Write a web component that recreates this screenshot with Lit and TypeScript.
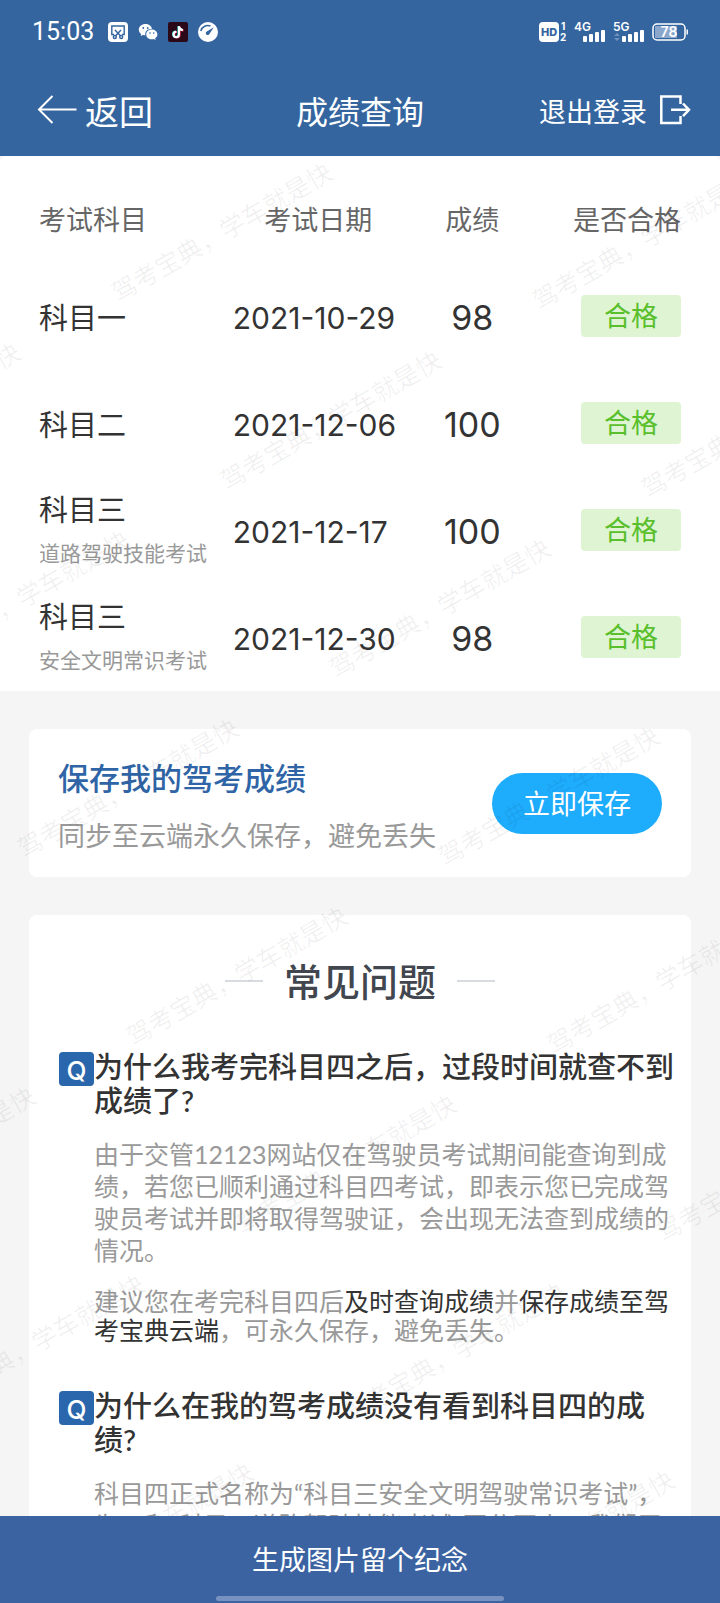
import { LitElement, html, css, svg } from "lit";
import { customElement, property } from "lit/decorators.js";

interface ExamRow {
  subject: string;
  note?: string;
  date: string;
  score: number;
}

const EXAMS: ExamRow[] = [
  { subject: "科目一", date: "2021-10-29", score: 98 },
  { subject: "科目二", date: "2021-12-06", score: 100 },
  { subject: "科目三", note: "道路驾驶技能考试", date: "2021-12-17", score: 100 },
  { subject: "科目三", note: "安全文明常识考试", date: "2021-12-30", score: 98 },
];

/* Phone status bar: clock, notification icons, signal and battery. */
@customElement("status-bar")
class StatusBar extends LitElement {
  static styles = css`
    :host {
      display: flex;
      align-items: center;
      justify-content: space-between;
      height: 64px;
      padding: 0 32px;
      color: #fff;
    }
    .group {
      display: flex;
      align-items: center;
      gap: 7px;
    }
    .left {
      gap: 10px;
    }
    .time {
      margin-right: 4px;
      font: 400 25px/32px Roboto, sans-serif;
    }
    .small {
      font: 700 10px Inter, sans-serif;
      fill: #fff;
    }
    .network {
      font: 600 12px Inter, sans-serif;
      fill: #fff;
    }
    .hd {
      font: 800 11px Inter, sans-serif;
      fill: #34659f;
    }
    .charge {
      font: 600 14px Inter, sans-serif;
      fill: #fff;
    }
    svg {
      display: block;
      overflow: visible;
    }
  `;

  private bars(x: number) {
    return [0, 1, 2, 3].map(
      (i) => svg`<rect x=${x + i * 6} y=${14 - i * 2} width="4" height=${6 + i * 2} rx="1" fill="#fff"/>`
    );
  }

  render() {
    return html`
      <div class="group left">
        <span class="time">15:03</span>
        <svg width="20" height="20" viewBox="0 0 20 20" fill="none" stroke="#34659f" stroke-width="1.4">
          <rect width="20" height="20" rx="4" fill="#fff" stroke="none" />
          <path d="M6 12.5H3.8V4h12.4v8.5H14" />
          <path d="M7 8l5.6 6M13 8l-5.6 6" />
          <circle cx="6.8" cy="15" r="1.5" />
          <circle cx="13.2" cy="15" r="1.5" />
        </svg>
        <svg width="20" height="20" viewBox="0 0 20 20">
          <path fill="#fff" d="M7.500 2C3.600 2 .8 4.600.8 7.700c0 1.800 1 3.300 2.400 4.300l-.6 2.100 2.300-1.200c.9.200 1.700.3 2.400.3C6.700 9.400 9.800 6.600 14 6.700 13.400 4 10.700 2 7.500 2z" />
          <path fill="#fff" d="M19.400 12.400c0-2.700-2.600-4.800-5.600-4.800-3.100 0-5.600 2.100-5.600 4.800s2.500 4.800 5.600 4.800c.7 0 1.300-.1 1.900-.3l1.900 1-.5-1.700c1.400-.9 2.300-2.200 2.300-3.800z" />
          <g fill="#34659f">
            <circle cx="5.300" cy="6" r=".9" />
            <circle cx="9.700" cy="6" r=".9" />
            <circle cx="12" cy="11" r=".8" />
            <circle cx="15.700" cy="11" r=".8" />
          </g>
        </svg>
        <svg width="20" height="20" viewBox="0 0 20 20" fill="none" stroke-width="2">
          <rect width="20" height="20" rx="2" fill="#2a0818" />
          <path stroke="#f5365c" d="M11.600 4.600v8.200a2.700 2.700 0 1 1-2.700-2.700M11.600 5c.3 2 1.800 3.300 3.900 3.400" />
          <path stroke="#35e0e0" d="M10.400 4v8.200a2.700 2.700 0 1 1-2.700-2.700M10.400 4.400c.3 2 1.800 3.300 3.900 3.400" />
          <path stroke="#fff" d="M11 4.200v8.300a2.700 2.700 0 1 1-2.700-2.700M11 4.500c.3 2 1.800 3.400 3.900 3.500" />
        </svg>
        <svg width="20" height="20" viewBox="0 0 20 20">
          <circle cx="10" cy="10" r="10" fill="#fff" />
          <path fill="none" stroke="#34659f" stroke-width="1.500" d="M2.800 9C4 4.500 8.500 2.500 12.500 4" />
          <path fill="#34659f" d="M15.800 5.200l-4.400 6.700a1.900 1.900 0 1 1-2.600-2.500z" />
        </svg>
      </div>
      <div class="group">
        <svg width="28" height="20" viewBox="0 0 28 20">
          <rect width="20" height="20" rx="4" fill="#fff" />
          <text class="hd" x="10" y="14" text-anchor="middle">HD</text>
          <text class="small" x="22" y="8">1</text>
          <text class="small" x="21" y="19">2</text>
        </svg>
        <svg width="32" height="20" viewBox="0 0 32 20">
          <text class="network" x="0" y="9">4G</text>
          ${this.bars(9)}
        </svg>
        <svg width="32" height="20" viewBox="0 0 32 20">
          <text class="network" x="0" y="9">5G</text>
          <path fill="#6f92bf" d="M1 14l3-3 3 3zM1 16l3 3 3-3z" />
          ${this.bars(9)}
        </svg>
        <svg width="36" height="18" viewBox="0 0 36 18">
          <rect x="3" y="3" width="22" height="12" fill="#8ba7cc" />
          <rect x="1" y="1" width="32" height="16" rx="4" fill="none" stroke="#fff" stroke-width="1.500" />
          <path stroke="#fff" stroke-width="1.500" d="M35.200 6.500v5" />
          <text class="charge" x="17" y="14" text-anchor="middle">78</text>
        </svg>
      </div>
    `;
  }
}

/* One question with its answer below; the answer is slotted. */
@customElement("faq-item")
class FaqItem extends LitElement {
  @property() question = "";

  static styles = css`
    :host {
      display: grid;
      grid-template-columns: 35px 1fr;
      row-gap: 20px;
    }
    .mark {
      box-sizing: border-box;
      height: 34px;
      margin-top: 2px;
      padding-top: 3px;
      border-radius: 4px;
      background: #2a66ab;
      color: #fff;
      font: 500 26px/32px Inter, sans-serif;
      text-align: center;
    }
    .question {
      margin: 0;
      color: #333;
      font-size: 29px;
      line-height: 34px;
      font-weight: 500;
    }
    .answer {
      grid-column: 2;
      display: flex;
      flex-direction: column;
      gap: 21px;
    }
  `;

  render() {
    return html`
      <span class="mark" aria-hidden="true">Q</span>
      <h3 class="question">${this.question}</h3>
      <div class="answer"><slot></slot></div>
    `;
  }
}

/* Slanted brand text repeated over the content. */
@customElement("water-mark")
class WaterMark extends LitElement {
  static styles = css`
    :host {
      position: absolute;
      inset: 0;
      overflow: hidden;
      pointer-events: none;
    }
    svg {
      display: block;
      width: 100%;
      height: 100%;
    }
    .mark {
      font-size: 25px;
      fill: #000;
      fill-opacity: 0.06;
    }
  `;

  render() {
    const marks = [];
    for (let row = 0; row < 8; row++) {
      for (let col = -2; col < 2; col++) {
        const x = 124 + row * 109 + col * 421;
        const y = 133 + row * 188 + col * 8;
        if (x > -200 && x < 720) {
          marks.push(svg`<text class="mark" x="-12" y="9" transform="translate(${x} ${y}) rotate(-30)">驾考宝典，学车就是快</text>`);
        }
      }
    }
    return html`<svg aria-hidden="true">${marks}</svg>`;
  }
}

@customElement("app-root")
class AppRoot extends LitElement {
  static styles = css`
    :host {
      display: flex;
      flex-direction: column;
      height: 100vh;
      background: #f5f5f5;
      color: #333;
      font-family: Lato, "Noto Sans CJK SC", sans-serif;
    }
    button {
      border: 0;
      padding: 0;
      background: none;
      color: #fff;
      font-family: inherit;
      font-size: 27px;
      cursor: pointer;
    }
    .top {
      flex: none;
      background: #34659f;
      color: #fff;
    }
    .nav {
      display: grid;
      grid-template-columns: 1fr auto 1fr;
      align-items: center;
      height: 92px;
      padding: 0 29px;
    }
    .back,
    .logout {
      display: flex;
      align-items: center;
    }
    .back {
      gap: 8px;
      padding-left: 8px;
      font-size: 34px;
    }
    .logout {
      justify-self: end;
      gap: 12px;
    }
    .title {
      margin: 0;
      font-size: 32px;
      font-weight: 400;
    }
    .content {
      position: relative;
      flex: 1;
      min-height: 0;
    }
    .scroll {
      height: 100%;
      overflow-y: auto;
      scrollbar-width: none;
    }
    .results {
      padding: 18px 39px 1px;
      border-radius: 6px 6px 0 0;
      background: #fff;
    }
    .table {
      width: 100%;
      table-layout: fixed;
      border-collapse: collapse;
    }
    .table th,
    .table td {
      padding: 0;
      text-align: center;
    }
    .table th {
      height: 88px;
      color: #666;
      font-size: 27px;
      font-weight: 400;
    }
    .table td {
      height: 107px;
    }
    .table .subject {
      width: 28%;
      text-align: left;
      white-space: nowrap;
    }
    .table .date {
      width: 31%;
    }
    .table .score {
      width: 17%;
    }
    .table .status {
      width: 24%;
      text-align: right;
    }
    .name {
      display: block;
      padding-top: 4px;
      font-size: 29px;
      line-height: 42px;
    }
    .note {
      display: block;
      color: #999;
      font-size: 21px;
      line-height: 44px;
    }
    .table td.date,
    .table td.score {
      box-sizing: border-box;
      padding-top: 4px;
      font-family: Inter, sans-serif;
    }
    .table td.date {
      padding-left: 14px;
      font-size: 30px;
      text-align: left;
    }
    .table td.score {
      font-size: 34px;
    }
    .badge {
      display: inline-block;
      width: 100px;
      border-radius: 4px;
      background: #def4d2;
      color: #5abf2c;
      font-size: 27px;
      line-height: 42px;
      text-align: center;
      vertical-align: middle;
    }
    .card {
      margin: 38px 29px 0;
      border-radius: 8px;
      background: #fff;
    }
    .save {
      display: flex;
      align-items: center;
      justify-content: space-between;
      min-height: 148px;
      padding: 0 29px;
    }
    .save-title {
      margin: 0;
      padding-top: 8px;
      color: #2f65a6;
      font-size: 31px;
      line-height: 58px;
      font-weight: 500;
    }
    .save-text {
      margin: 0;
      color: #999;
      font-size: 27px;
      line-height: 58px;
    }
    .save-button {
      padding: 0 31px;
      border-radius: 31px;
      background: #1eacfd;
      line-height: 61px;
    }
    .faq {
      display: flex;
      flex-direction: column;
      gap: 44px;
      padding: 41px 17px 40px 30px;
    }
    .faq-title {
      display: flex;
      align-items: center;
      justify-content: center;
      gap: 21px;
      margin: 0 13px 0 0;
      color: #41464f;
      font-size: 38px;
      line-height: 50px;
      font-weight: 500;
    }
    .faq-title::before,
    .faq-title::after {
      content: "";
      width: 38px;
      height: 2px;
      background: #d8dbdf;
    }
    .text {
      margin: 0;
      color: #999;
      font-size: 25px;
      line-height: 32px;
    }
    .tight {
      line-height: 29px;
    }
    .strong {
      color: #333;
      font-weight: 400;
    }
    .bottom {
      flex: none;
      display: flex;
      flex-direction: column;
      align-items: center;
      padding-bottom: 2px;
      background: #3b63a2;
    }
    .share {
      width: 100%;
      height: 80px;
      padding-top: 8px;
      line-height: 72px;
    }
    .home {
      width: 40%;
      height: 5px;
      border-radius: 3px;
      background: #7792c1;
    }
  `;

  render() {
    return html`
      <header class="top">
        <status-bar></status-bar>
        <nav class="nav">
          <button class="back">
            <svg width="40" height="30" viewBox="0 0 40 30" fill="none" stroke="#fff" stroke-width="2">
              <path d="M15.500 1L2 14.500 15.500 28M2 14.500H39.500" />
            </svg>
            返回
          </button>
          <h1 class="title">成绩查询</h1>
          <button class="logout">
            退出登录
            <svg width="32" height="30" viewBox="0 0 32 30" fill="none" stroke="#fff" stroke-width="2.500">
              <path d="M21.500 9V1.500H2.300v26.500H21.500V21M12 14.800H29M24 8.500l6 6.300-6 6.300" />
            </svg>
          </button>
        </nav>
      </header>

      <main class="content">
        <div class="scroll">
          <section class="results">
            <table class="table">
              <thead>
                <tr>
                  <th class="subject" scope="col">考试科目</th>
                  <th class="date" scope="col">考试日期</th>
                  <th class="score" scope="col">成绩</th>
                  <th class="status" scope="col">是否合格</th>
                </tr>
              </thead>
              <tbody>
                ${EXAMS.map(
                  (e) => html`<tr>
                    <td class="subject">
                      <span class="name">${e.subject}</span>
                      ${e.note ? html`<span class="note">${e.note}</span>` : null}
                    </td>
                    <td class="date">${e.date}</td>
                    <td class="score">${e.score}</td>
                    <td class="status"><span class="badge">合格</span></td>
                  </tr>`
                )}
              </tbody>
            </table>
          </section>

          <section class="card save">
            <div>
              <h2 class="save-title">保存我的驾考成绩</h2>
              <p class="save-text">同步至云端永久保存，避免丢失</p>
            </div>
            <button class="save-button">立即保存</button>
          </section>

          <section class="card faq">
            <h2 class="faq-title">常见问题</h2>
            <faq-item question="为什么我考完科目四之后，过段时间就查不到成绩了?">
              <p class="text">由于交管12123网站仅在驾驶员考试期间能查询到成绩，若您已顺利通过科目四考试，即表示您已完成驾驶员考试并即将取得驾驶证，会出现无法查到成绩的情况。</p>
              <p class="text tight">建议您在考完科目四后<strong class="strong">及时查询成绩</strong>并<strong class="strong">保存成绩至驾考宝典云端</strong>，可永久保存，避免丢失。</p>
            </faq-item>
            <faq-item question="为什么在我的驾考成绩没有看到科目四的成绩?">
              <p class="text">科目四正式名称为“科目三安全文明驾驶常识考试”，为了和“科目三道路驾驶技能考试”区分开来，我们习惯称之为科目四。</p>
            </faq-item>
          </section>
        </div>
        <water-mark></water-mark>
      </main>

      <footer class="bottom">
        <button class="share">生成图片留个纪念</button>
        <div class="home"></div>
      </footer>
    `;
  }
}
